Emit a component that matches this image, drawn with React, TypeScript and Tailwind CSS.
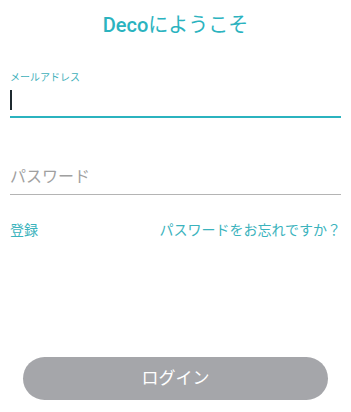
import React from 'react';

export default function App() {
    return (
        <div className="w-[351px] h-[412px] bg-white flex flex-col font-['Roboto','Noto_Sans_CJK_JP',sans-serif]">
            <h1 className="mt-[10px] text-center text-[20px] leading-[30px] text-[#2bb3bf]">
                <span className="font-medium">Deco</span>
                <span className="font-normal">にようこそ</span>
            </h1>

            <div className="mt-[31px] mx-[10px]">
                <p className="text-[10px] leading-[14px] text-[#3fb0ba]">メールアドレス</p>
                <div className="h-[31px] flex items-center border-b-2 border-[#2bb3bf] pb-[4px] mt-[2px]">
                    <span className="block w-[2px] h-[20px] bg-[#1f2a30]" />
                </div>
            </div>

            <div className="mt-[48px] mx-[10px] border-b border-[#b4b4b4] pb-[6px]">
                <p className="text-[16px] leading-[22px] text-[#a0a0a0]">パスワード</p>
            </div>

            <div className="mt-[25px] mx-[10px] flex justify-between text-[14px] leading-[20px] text-[#3bb3bd]">
                <span>登録</span>
                <span>パスワードをお忘れですか？</span>
            </div>

            <div className="mt-auto mb-[12px] mx-[23px]">
                <button className="w-full h-[43px] rounded-full bg-[#a5a6aa] text-white text-[17px]">
                    ログイン
                </button>
            </div>
        </div>
    );
}
